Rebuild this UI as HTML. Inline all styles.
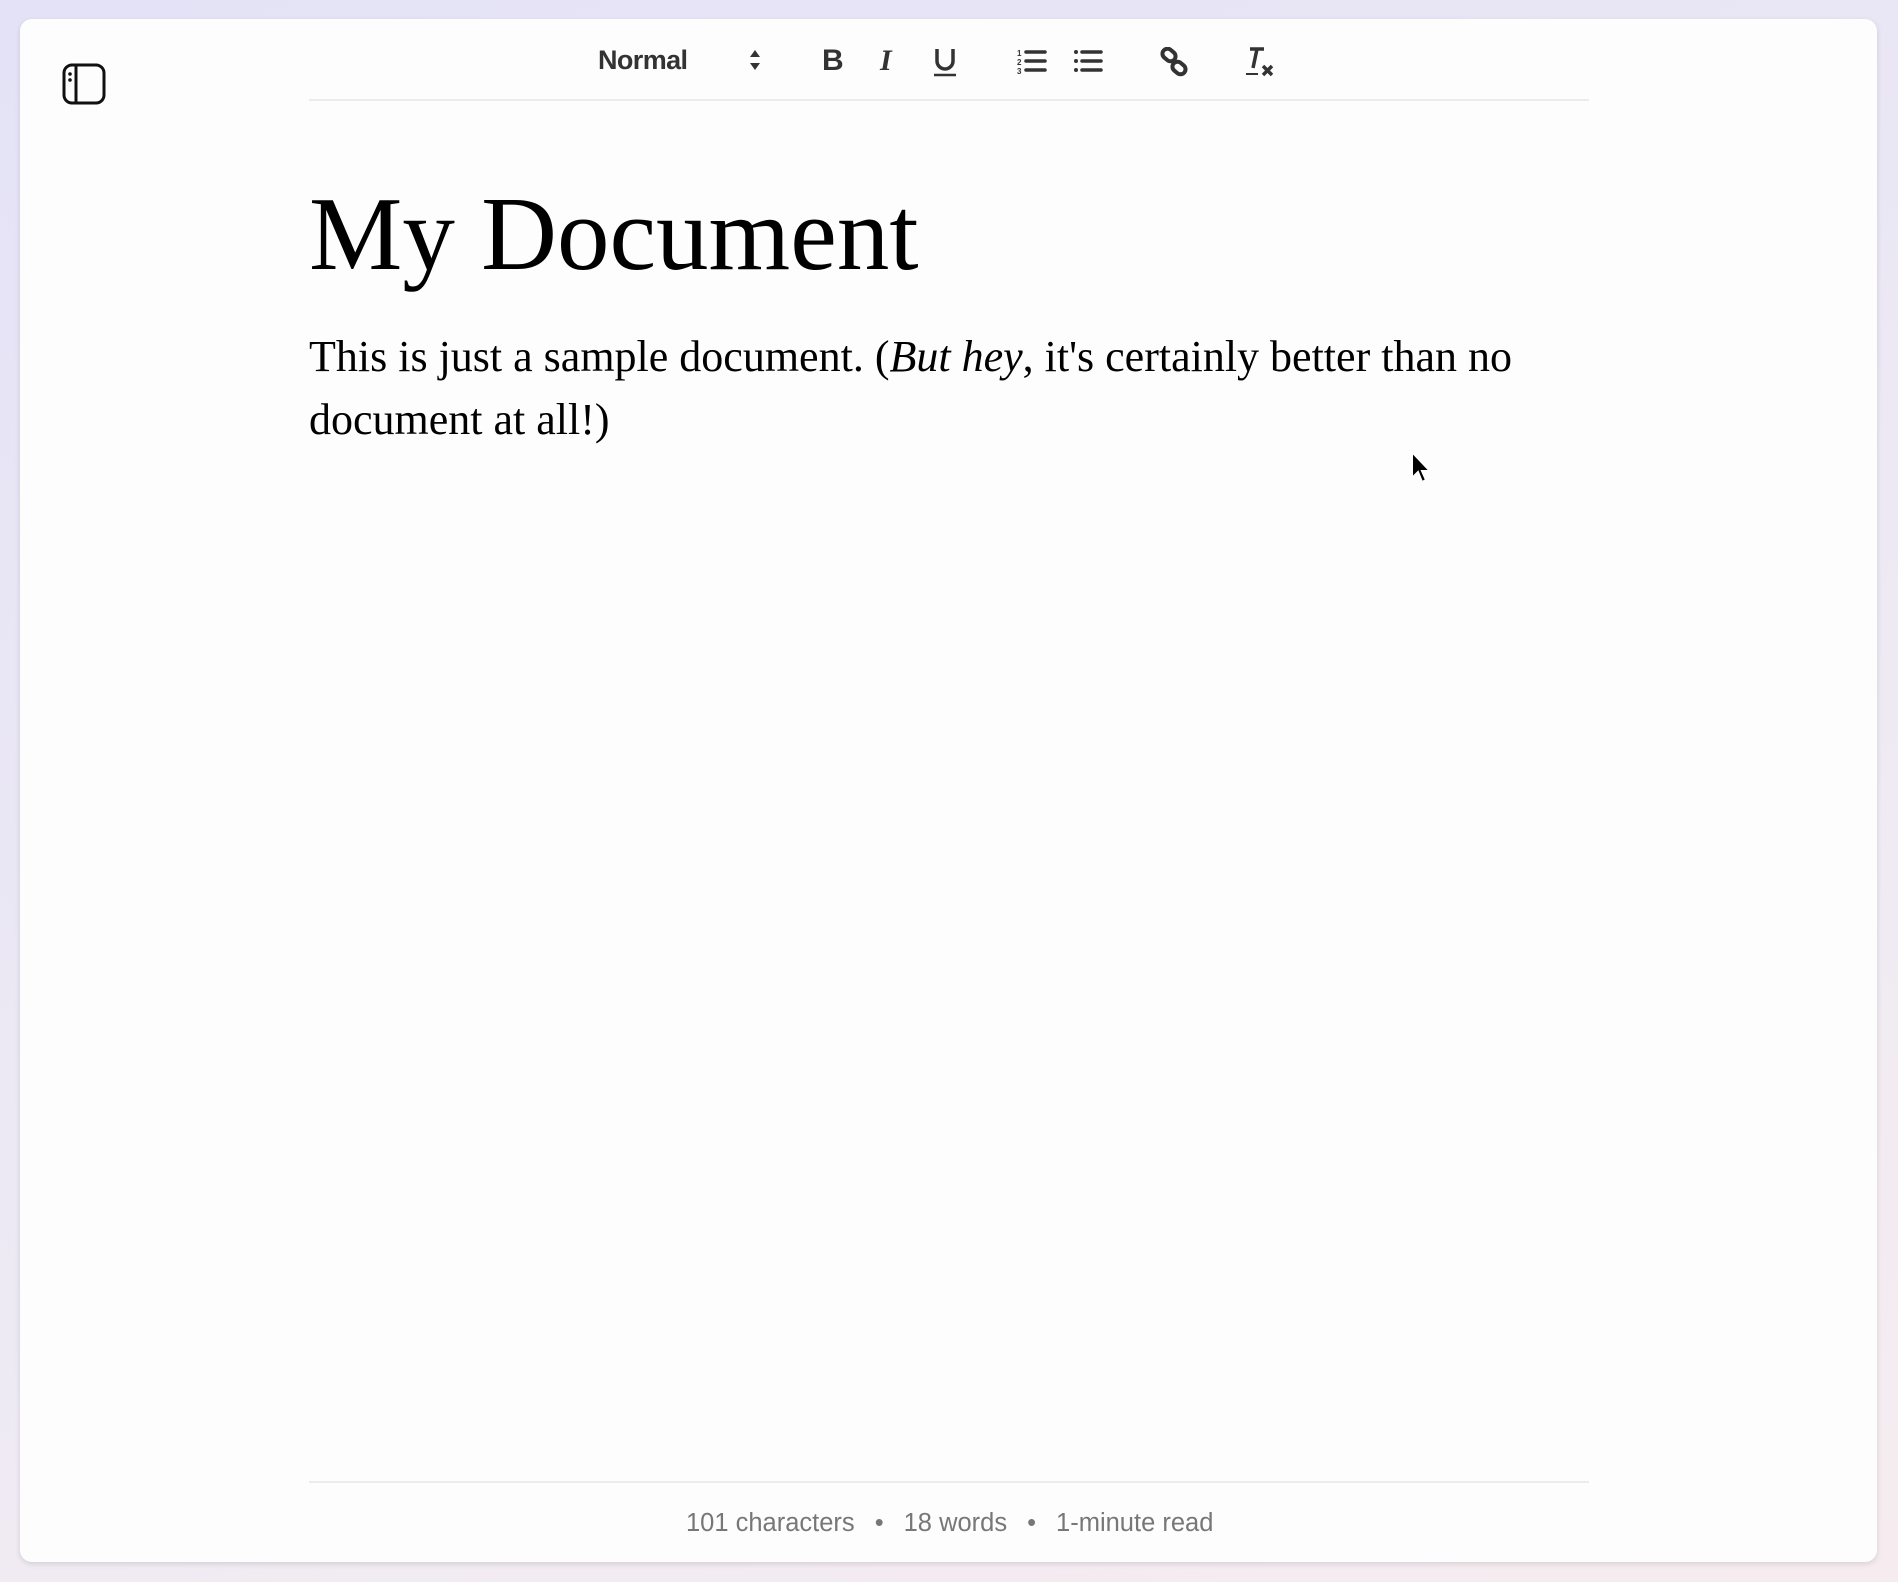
<!DOCTYPE html>
<html><head><meta charset="utf-8"><style>
html,body{margin:0;padding:0}
body{width:1898px;height:1582px;background:linear-gradient(160deg,#e4e2f6 0%,#eeeaf4 60%,#f6ecef 100%);position:relative;overflow:hidden;font-family:"Liberation Sans",sans-serif}
.card{position:absolute;left:20px;top:19px;width:1857px;height:1543px;background:#fdfdfd;border-radius:12px;box-shadow:0 2px 6px rgba(0,0,0,.12)}
.abs{position:absolute}
.line{position:absolute;left:309px;width:1280px;height:2px;background:#ececec}
h1{position:absolute;left:309px;top:169px;margin:0;font-family:"Liberation Serif",serif;font-weight:400;font-size:105px;line-height:130px;color:#000;white-space:nowrap}
p{position:absolute;left:309px;top:325px;margin:0;font-family:"Liberation Serif",serif;font-size:44px;line-height:63px;color:#000;white-space:nowrap}
.foot{position:absolute;left:686px;top:1509px;font-size:25.5px;color:#777;white-space:nowrap}
.dot{display:inline-block;margin:0 20px}
</style></head><body>
<div class="card"></div>
<svg class="abs" style="left:62px;top:63px" width="44" height="42" viewBox="0 0 44 42"><rect x="2" y="2" width="40" height="38" rx="8" fill="none" stroke="#111" stroke-width="3"/><line x1="14" y1="2" x2="14" y2="40" stroke="#111" stroke-width="3"/><circle cx="8" cy="11" r="1.8" fill="#111"/><circle cx="8" cy="17" r="1.8" fill="#111"/></svg>
<div class="abs" style="left:598px;top:45px;font-size:27px;font-weight:700;color:#333;letter-spacing:-0.6px">Normal</div>
<svg class="abs" style="left:748px;top:48px" width="14" height="24" viewBox="0 0 14 24"><path d="M7 2 L12 9 H2Z M7 22 L12 15 H2Z" fill="#333"/></svg>
<div class="abs" style="left:822px;top:44px;font-size:30px;font-weight:700;color:#333">B</div>
<div class="abs" style="left:880px;top:44px;font-size:30px;font-style:italic;color:#333;font-family:'Liberation Serif',serif;font-weight:700">I</div>
<svg class="abs" style="left:932px;top:46px" width="26" height="32" viewBox="0 0 26 32"><path d="M5 3 V15 a8 8 0 0 0 16 0 V3" fill="none" stroke="#333" stroke-width="3.5"/><line x1="2" y1="29" x2="24" y2="29" stroke="#333" stroke-width="2.5"/></svg>
<svg class="abs" style="left:1017px;top:48px" width="30" height="28" viewBox="0 0 30 28"><text x="0" y="8" font-size="8" font-weight="700" font-family="Liberation Sans" fill="#333">1</text><text x="0" y="17" font-size="8" font-weight="700" font-family="Liberation Sans" fill="#333">2</text><text x="0" y="26" font-size="8" font-weight="700" font-family="Liberation Sans" fill="#333">3</text><path d="M9 4H28M9 13H28M9 22H28" stroke="#333" stroke-width="3.5" stroke-linecap="round"/></svg>
<svg class="abs" style="left:1073px;top:48px" width="30" height="28" viewBox="0 0 30 28"><circle cx="3" cy="4" r="2" fill="#333"/><circle cx="3" cy="13" r="2" fill="#333"/><circle cx="3" cy="22" r="2" fill="#333"/><path d="M9 4H28M9 13H28M9 22H28" stroke="#333" stroke-width="3.5" stroke-linecap="round"/></svg>
<svg class="abs" style="left:1159px;top:47px" width="30" height="30" viewBox="0 0 30 30"><g fill="none" stroke="#333" stroke-width="4"><rect x="3" y="3" width="14" height="10" rx="5" transform="rotate(40 10 8)"/><rect x="13" y="16" width="14" height="10" rx="5" transform="rotate(40 20 21)"/></g></svg>
<svg class="abs" style="left:1244px;top:46px" width="32" height="32" viewBox="0 0 32 32"><path d="M6 3H20M13 3L9 22" stroke="#333" stroke-width="3.5" fill="none"/><line x1="2" y1="28" x2="14" y2="28" stroke="#333" stroke-width="2"/><path d="M19 20L28 29M28 20L19 29" stroke="#333" stroke-width="3.5"/></svg>
<div class="line" style="top:99px"></div>
<h1>My Document</h1>
<p>This is just a sample document. (<i>But hey</i>, it's certainly better than no<br>document at all!)</p>
<svg class="abs" style="left:1410px;top:450px" width="24" height="36" viewBox="0 0 24 36"><path d="M2 2 V28 L8 22 L12 32 L16 30 L12 21 H20Z" fill="#000" stroke="#fff" stroke-width="2"/></svg>
<div class="line" style="top:1481px"></div>
<div class="foot">101 characters<span class="dot">•</span>18 words<span class="dot">•</span>1-minute read</div>
</body></html>
